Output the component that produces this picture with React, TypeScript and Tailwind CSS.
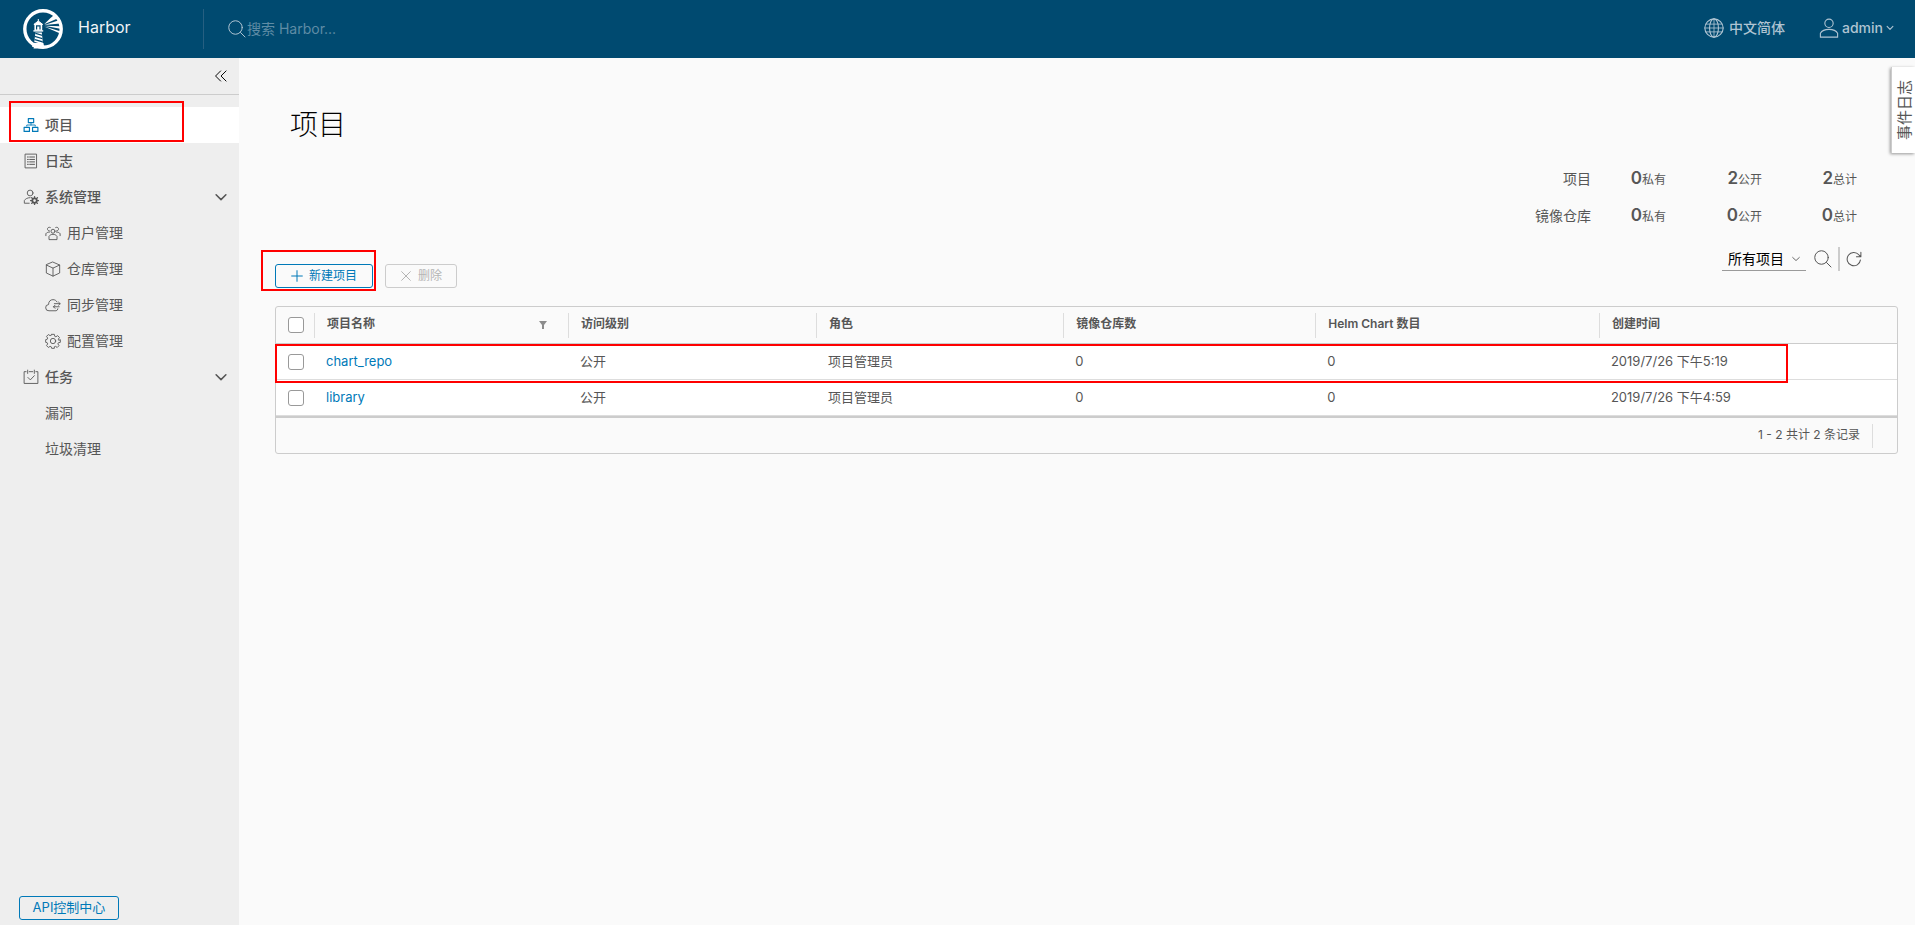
import type { ReactNode } from "react";

const projects = [
  { name: "chart_repo", access: "公开", role: "项目管理员", repos: 0, charts: 0, created: "2019/7/26 下午5:19" },
  { name: "library", access: "公开", role: "项目管理员", repos: 0, charts: 0, created: "2019/7/26 下午4:59" },
];

const stats = [
  { label: "项目", priv: 0, pub: 2, total: 2 },
  { label: "镜像仓库", priv: 0, pub: 0, total: 0 },
];

function Icon({ className = "size-4", children }: { className?: string; children: ReactNode }) {
  return (
    <svg
      viewBox="0 0 36 36"
      className={`shrink-0 ${className}`}
      fill="none"
      stroke="currentColor"
      strokeWidth="2"
      strokeLinecap="round"
      strokeLinejoin="round"
      aria-hidden="true"
    >
      {children}
    </svg>
  );
}

function HarborLogo() {
  return (
    <svg viewBox="0 0 40 40" className="size-10 shrink-0" aria-hidden="true">
      <clipPath id="tower">
        <path d="M12.4 23.6h6.4l1.6 16H10.6z" />
      </clipPath>
      <circle cx="20" cy="20" r="18.2" fill="none" stroke="#fff" strokeWidth="3.4" />
      {/* light beams */}
      <path d="M21.2 15.2 27.5 9l5-4.2 2.6 4.4z" fill="#fff" />
      <path d="M21.4 16l13.8-4.4 2 3z" fill="#fff" />
      <path d="M21.4 16.8l15.8.4v2.6z" fill="#fff" />
      <path d="M21.2 17.6l16 4.6v2.4z" fill="#fff" />
      {/* lantern room */}
      <path d="M15.3 10v2.4M15.3 12l4.4 3.4h-8.8z" fill="#fff" stroke="#fff" strokeWidth="1" />
      <path d="M11.4 15h7.8v6.6h-7.8z" fill="#fff" />
      <path d="M13.6 20.6v-3.8h3.4v3.8" fill="none" stroke="#004a70" strokeWidth="1.2" />
      <path d="M10.4 21.2h9.8v1.4h-9.8z" fill="#fff" />
      {/* striped tower */}
      <g clipPath="url(#tower)">
        <path d="M10 22h12v18H10z" fill="#fff" />
        <path
          d="M10 23.6l12 3.6M10 26.8l12 3.6M10 30l12 3.6M10 33.2l12 3.6"
          stroke="#004a70"
          strokeWidth="1.3"
        />
      </g>
      <path d="M10.8 34h9.6l.8 4H9z" fill="#fff" />
    </svg>
  );
}

const icons = {
  org: (
    <>
      <path d="M12 3.5h12v9H12zM2.5 23.5h12v9h-12zM21.5 23.5h12v9h-12z" strokeWidth="2.6" />
      <path d="M8.5 20.5V18h19v2.5M18 13v5" />
    </>
  ),
  list: (
    <>
      <path d="M5.5 2.5h25v31h-25z" />
      <path d="M10 9h2M10 14.5h2M10 20h2M10 25.5h2M15 9h11M15 14.5h11M15 20h11M15 25.5h11" strokeWidth="2.2" />
    </>
  ),
  admin: (
    <>
      <circle cx="16" cy="9" r="6.5" />
      <path d="M14 32H3v-6c2.5-4 7-6.5 13-6.5" />
      <circle cx="26" cy="26" r="5" strokeWidth="4" />
      <path
        d="M26 17v3M26 32v3M17 26h3M32 26h3M19.6 19.6l2 2M30.4 30.4l2 2M32.4 19.6l-2 2M21.6 30.4l-2 2"
        strokeWidth="3"
      />
    </>
  ),
  users: (
    <>
      <circle cx="18" cy="14" r="4.5" />
      <path d="M9 32v-6.5c2-3 5-4.5 9-4.5s7 1.5 9 4.5V32z" />
      <path d="M12 5.5a4.3 4.3 0 1 0-2 8M24 5.5a4.3 4.3 0 1 1 2 8M2 24v-4.5c1.5-2 4-3.5 8-3.5M34 24v-4.5c-1.5-2-4-3.5-8-3.5" />
    </>
  ),
  box: (
    <>
      <path d="M18 2.5l15 6.5v18L18 34 3 27V9z" />
      <path d="M3 9l15 7 15-7M18 16v18" />
    </>
  ),
  cloud: (
    <>
      <path d="M29 26.5a5 5 0 0 1-4 4.5H9a7 7 0 0 1-1-14C8 9 13 6 18 6c4 0 7 1.5 9 5" />
      <path d="M21 15h13M30.5 11.5L34 15l-3.5 3.5M32 22H19M22.5 18.5L19 22l3.5 3.5" />
    </>
  ),
  cog: (
    <>
      <circle cx="18" cy="18" r="6" />
      <path d="M15 3h6l1 4.5 2.5 1 4-2.500 4 4-2.500 4 1 2.500L34.500 15v6L30 22l-1 2.500 2.500 4-4 4-4-2.500-2.500 1L21 34.500h-6L14 31l-2.500-1-4 2.500-4-4 2.500-4L5 22l-3.500-1v-6L5 14l1-2.500-2.500-4 4-4 4 2.500 2.500-1z" />
    </>
  ),
  tasks: (
    <>
      <path d="M7 6H2.5v26.5h31V6H29M14 6h8" />
      <path d="M10.5 2.5V10M25.5 2.5V10M11 19l5.5 5.5L25.5 15" />
    </>
  ),
};

function NavItem({ icon, label, active, sub, bold = true, open }: {
  icon?: ReactNode;
  label: string;
  active?: boolean;
  sub?: boolean;
  bold?: boolean;
  open?: boolean;
}) {
  const row = `flex h-9 w-full items-center gap-1.5 pr-2.5 text-sm ${sub ? "pl-[45px]" : "pl-[23px]"} ${
    active ? "bg-white" : ""
  } ${bold ? "font-medium" : "font-normal"}`;
  const content = (
    <>
      {icon && <Icon className={active ? "size-4 text-[#0079b8]" : "size-4"}>{icon}</Icon>}
      <span>{label}</span>
    </>
  );

  if (open) {
    return (
      <button type="button" aria-expanded="true" className={row}>
        {content}
        <Icon className="ml-auto size-4">
          <path d="M7 13l11 11 11-11" strokeWidth="3.5" />
        </Icon>
      </button>
    );
  }
  return (
    <a href="#" className={row}>
      {content}
    </a>
  );
}

function Header() {
  return (
    <header className="flex h-[58px] shrink-0 items-center bg-[#004a70] pr-[21px] text-[#afc4d2]">
      <a href="#" className="flex h-10 w-[204px] items-center gap-[15px] border-r border-[#265f81] pl-[23px] text-base text-[#f0f4f7]">
        <HarborLogo />
        <span className="pb-1">Harbor</span>
      </a>
      <label className="flex flex-1 items-center pl-6">
        <Icon className="size-[18px]">
          <circle cx="15" cy="15" r="13.5" />
          <path d="M25 25l9 9" />
        </Icon>
        <input
          type="text"
          aria-label="搜索"
          placeholder="搜索 Harbor..."
          className="w-60 bg-transparent pl-px text-sm outline-none placeholder:text-[#5f8ca5]"
        />
      </label>
      <div className="flex items-center gap-[34px] pb-0.5 text-sm font-medium">
        <button type="button" className="flex items-center gap-[5px]">
          <Icon className="size-5">
            <circle cx="18" cy="18" r="16.5" />
            <ellipse cx="18" cy="18" rx="8" ry="16.5" />
            <path d="M18 1.5v33M4 11h28M1.5 18h33M4 25h28" strokeWidth="1.5" />
          </Icon>
          <span>中文简体</span>
        </button>
        <button type="button" className="flex items-center gap-[3px]">
          <Icon className="size-5">
            <circle cx="18" cy="9.5" r="7.5" />
            <path d="M2.5 34.5v-7C5 23 11 20.5 18 20.5s13 2.5 15.5 7v7z" />
          </Icon>
          <span>admin</span>
          <Icon className="size-2">
            <path d="M5 11l13 13 13-13" strokeWidth="5" />
          </Icon>
        </button>
      </div>
    </header>
  );
}

function Sidebar() {
  return (
    <aside className="flex w-[239px] shrink-0 flex-col bg-[#eee] text-[#565656]">
      <div className="flex h-[37px] items-center justify-end border-b border-[#ccc] pr-[11px] text-black">
        <button type="button" aria-label="收起">
          <Icon className="size-3.5">
            <path d="M17 5L4 18l13 13M31 5L18 18l13 13" strokeWidth="2.5" />
          </Icon>
        </button>
      </div>
      <nav className="pt-3">
        <div className="relative">
          <NavItem icon={icons.org} label="项目" active />
          <div className="pointer-events-none absolute -top-1.5 left-[9px] h-[41px] w-[175px] border-2 border-[#f00]" />
        </div>
        <NavItem icon={icons.list} label="日志" />
        <NavItem icon={icons.admin} label="系统管理" open />
        <NavItem icon={icons.users} label="用户管理" sub bold={false} />
        <NavItem icon={icons.box} label="仓库管理" sub bold={false} />
        <NavItem icon={icons.cloud} label="同步管理" sub bold={false} />
        <NavItem icon={icons.cog} label="配置管理" sub bold={false} />
        <NavItem icon={icons.tasks} label="任务" open />
        <NavItem label="漏洞" sub bold={false} />
        <NavItem label="垃圾清理" sub bold={false} />
      </nav>
      <a
        href="#"
        className="mt-auto mb-[5px] ml-[19px] flex h-6 w-[100px] items-center justify-center rounded-[3px] border border-[#0079b8] text-[13px] text-[#0079b8]"
      >
        API控制中心
      </a>
    </aside>
  );
}

function Stat({ value, label, className }: { value: number; label: string; className: string }) {
  return (
    <td className={`pb-0.5 text-right text-xs ${className}`}>
      <span className="text-[17px] leading-5 font-semibold">{value}</span>
      {label}
    </td>
  );
}

function Toolbar() {
  return (
    <div className="mt-3 flex h-[42px] items-end justify-between">
      <div className="flex gap-3">
        <div className="relative">
          <button
            type="button"
            className="flex h-6 w-[98px] items-center justify-center gap-1.5 rounded-[3px] border border-[#0079b8] text-xs text-[#0079b8]"
          >
            <Icon className="size-3">
              <path d="M18 2v32M2 18h32" strokeWidth="3" />
            </Icon>
            新建项目
          </button>
          <div className="pointer-events-none absolute -top-3.5 -left-3.5 h-[41px] w-[115px] border-2 border-[#f00]" />
        </div>
        <button
          type="button"
          disabled
          className="flex h-6 w-[72px] items-center justify-center gap-1.5 rounded-[3px] border border-[#ccc] text-xs text-[#b5b5b5]"
        >
          <Icon className="size-3">
            <path d="M5 5l26 26M31 5L5 31" strokeWidth="3" />
          </Icon>
          删除
        </button>
      </div>
      <div className="flex items-center self-start pt-px pr-9 text-[#565656]">
        <label className="flex h-[23px] items-center border-b border-[#9a9a9a] pr-1.5">
          <select aria-label="项目范围" className="w-[66px] appearance-none bg-transparent pl-1.5 text-sm text-black outline-none">
            <option>所有项目</option>
          </select>
          <Icon className="ml-1 size-2">
            <path d="M3 11l15 14 15-14" strokeWidth="4" />
          </Icon>
        </label>
        <button type="button" aria-label="搜索" className="ml-2">
          <Icon className="size-[18px]">
            <circle cx="15" cy="15" r="13.5" />
            <path d="M25 25l9 9" />
          </Icon>
        </button>
        <span className="mx-1.5 h-6 w-0.5 bg-[#ccc]" />
        <button type="button" aria-label="刷新">
          <Icon className="size-4">
            <path d="M32.5 20A15 15 0 1 1 29 8.5l4 4M33.5 3v10h-10" strokeWidth="2.3" />
          </Icon>
        </button>
      </div>
    </div>
  );
}

const checkbox = "block size-4 appearance-none rounded-[3px] border border-[#999] bg-white";

function HeadCell({ width, children }: { width: string; children: ReactNode }) {
  return (
    <th scope="col" className={`border-b border-[#ccc] p-0 text-left font-semibold ${width}`}>
      <div className="flex h-[25px] items-center justify-between border-l border-[#ddd] pr-5 pb-0.5 pl-3">
        {children}
      </div>
    </th>
  );
}

function ProjectTable() {
  return (
    <div className="relative mt-[18px] rounded-[3px] border border-[#ccc]">
      <table className="w-full table-fixed border-separate border-spacing-0 text-[13px]">
        <thead className="text-xs">
          <tr className="h-[37px]">
            <th scope="col" className="w-[38px] border-b border-[#ccc] p-0 pl-3">
              <input type="checkbox" aria-label="全选" className={checkbox} />
            </th>
            <HeadCell width="w-[15.67%]">
              项目名称
              <svg viewBox="0 0 10 10" className="size-2.5 text-[#8c8c8c]" aria-hidden="true">
                <path d="M1 2h8L6 6v4H4V6z" fill="currentColor" />
              </svg>
            </HeadCell>
            <HeadCell width="w-[15.3%]">访问级别</HeadCell>
            <HeadCell width="w-[15.25%]">角色</HeadCell>
            <HeadCell width="w-[15.55%]">镜像仓库数</HeadCell>
            <HeadCell width="w-[17.5%]">Helm Chart 数目</HeadCell>
            <HeadCell width="">创建时间</HeadCell>
          </tr>
        </thead>
        <tbody className="bg-white [&_td]:border-b [&_td]:border-[#ddd] [&_td]:p-0 [&_td]:pl-3">
          {projects.map((p) => (
            <tr key={p.name} className="h-9">
              <td>
                <input type="checkbox" aria-label={p.name} className={checkbox} />
              </td>
              <td>
                <a href="#" className="text-[#0079b8]">
                  {p.name}
                </a>
              </td>
              <td>{p.access}</td>
              <td>{p.role}</td>
              <td>{p.repos}</td>
              <td>{p.charts}</td>
              <td>{p.created}</td>
            </tr>
          ))}
        </tbody>
      </table>
      <div className="flex h-[37px] items-center justify-end border-t-2 border-[#ccc] pr-6 text-xs">
        <span className="flex h-6 items-center border-r border-[#ddd] pr-3 pb-0.5">1 - 2 共计 2 条记录</span>
      </div>
      <div className="pointer-events-none absolute top-[37px] right-[109px] -left-px h-[39px] border-2 border-[#f00]" />
    </div>
  );
}

export default function App() {
  return (
    <div className="flex h-screen flex-col bg-[#fafafa] font-['Inter','Noto_Sans_CJK_SC',sans-serif] text-[#565656]">
      <Header />
      <div className="relative flex min-h-0 flex-1">
        <Sidebar />
        <main className="min-w-0 flex-1 pt-[49px] pr-[17px] pl-9">
          <h1 className="pl-[15px] text-[28px] leading-9 font-light text-black">项目</h1>
          <table className="mt-[17px] mr-[41px] ml-auto">
            <tbody>
              {stats.map((s) => (
                <tr key={s.label} className="h-[37px]">
                  <th scope="row" className="text-right text-sm font-normal">
                    {s.label}
                  </th>
                  <Stat value={s.priv} label="私有" className="w-[75px]" />
                  <Stat value={s.pub} label="公开" className="w-24" />
                  <Stat value={s.total} label="总计" className="w-[95px]" />
                </tr>
              ))}
            </tbody>
          </table>
          <Toolbar />
          <ProjectTable />
        </main>
        {/* Event log drawer handle */}
        <button
          type="button"
          className="absolute top-[9px] right-0 flex h-[86px] w-6 items-center justify-end border-l border-[#ccc] bg-white text-[15px] shadow-[-1px_1px_3px_rgba(0,0,0,0.4)]"
        >
          <span className="rotate-180 leading-5 [text-orientation:sideways] [writing-mode:vertical-rl]">事件日志</span>
        </button>
      </div>
    </div>
  );
}
